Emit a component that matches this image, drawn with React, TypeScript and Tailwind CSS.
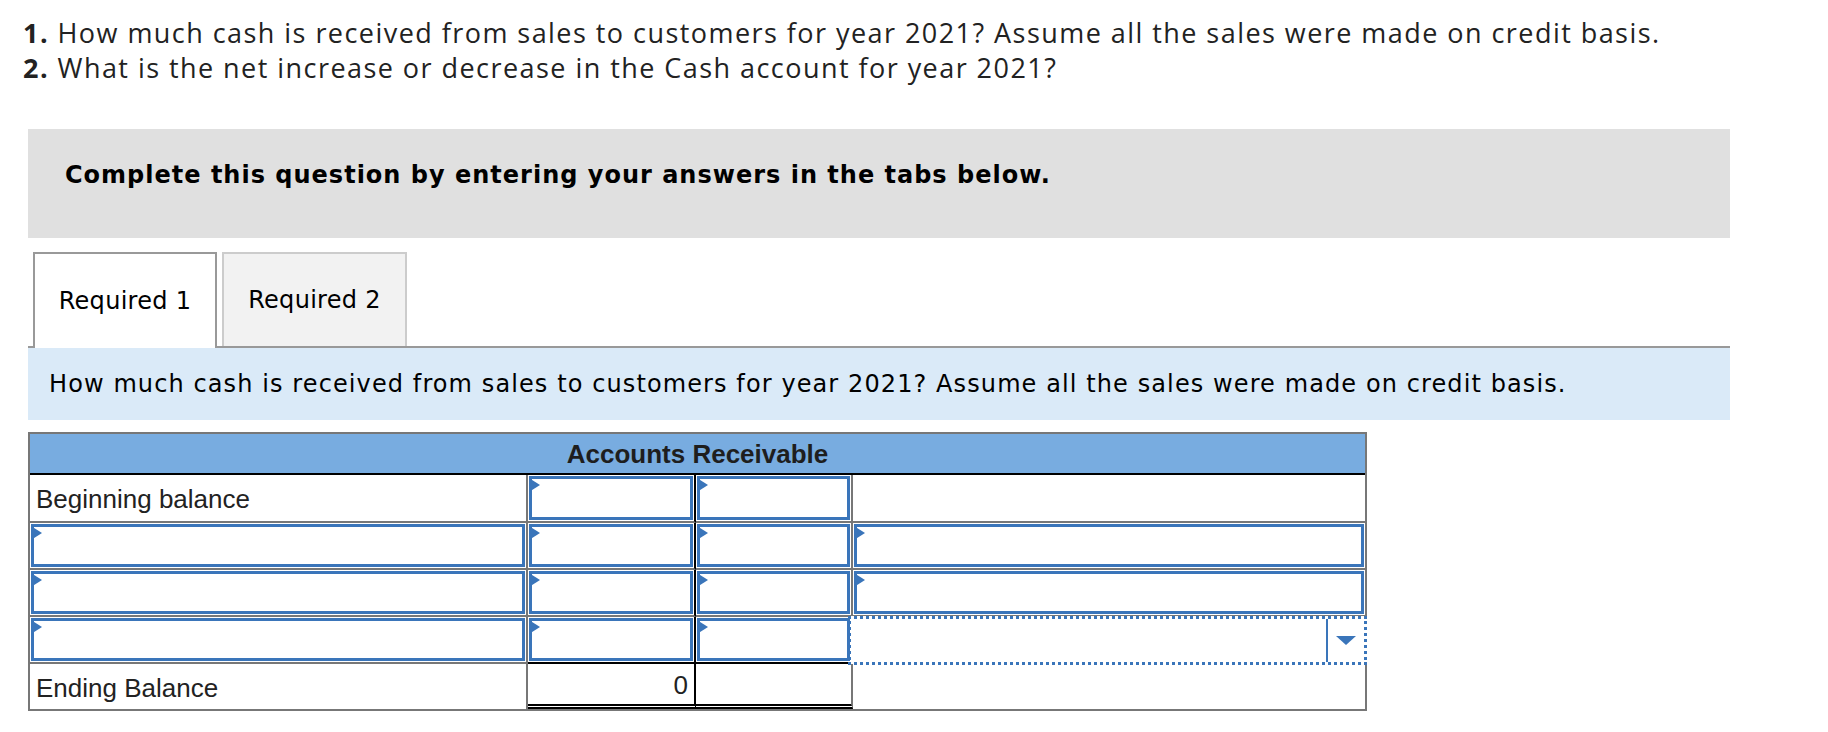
import React from 'react';

type Border = 'gray' | 'black' | 'none';

function Flag() {
  return (
    <svg className="absolute left-[-3px] top-[-1px]" width="11" height="14" viewBox="0 0 11 14">
      <path d="M0 0 L11 7 L0 14 Z" fill="#3a75ba" />
    </svg>
  );
}

function InputBox() {
  return (
    <div className="relative h-full w-full border-[3px] border-[#3a75ba] bg-white">
      <Flag />
    </div>
  );
}

function Cell({
  children,
  h,
  right = 'gray',
  bottom = 'gray',
  className = '',
}: {
  children?: React.ReactNode;
  h: string;
  right?: Border;
  bottom?: Border;
  className?: string;
}) {
  const r = right === 'gray' ? 'border-r-2 border-r-[#777]' : right === 'black' ? 'border-r-2 border-r-black' : '';
  const b = bottom === 'gray' ? 'border-b-2 border-b-[#777]' : bottom === 'black' ? 'border-b-2 border-b-black' : '';
  return <div className={`${h} ${r} ${b} ${className}`}>{children}</div>;
}

function Dropdown() {
  return (
    <div className="-ml-[5px] -mr-[2px] -mt-[1px] flex h-[49px] border-[3px] border-dotted border-[#3a75ba] bg-white">
      <div className="flex-1 border-r-2 border-[#3a75ba]" />
      <div className="flex w-[36px] items-center justify-center">
        <svg width="20" height="9" viewBox="0 0 20 9">
          <path d="M0 0 L20 0 L10 9 Z" fill="#3a75ba" />
        </svg>
      </div>
    </div>
  );
}

export default function App() {
  const r1 = 'h-[48px]';
  const r2 = 'h-[47px]';
  const r5 = 'h-[45px]';

  return (
    <div className="h-[732px] w-[1828px] overflow-hidden bg-white">
      <div className="pl-[23px] pt-[15px] font-['Open_Sans',sans-serif] text-[27px] leading-[35px] tracking-[1.45px] text-[#222]">
        <p>
          <b>1.</b> How much cash is received from sales to customers for year 2021? Assume all the sales were made on credit basis.
        </p>
        <p>
          <b>2.</b> What is the net increase or decrease in the Cash account for year 2021?
        </p>
      </div>

      <div className="ml-[28px] w-[1702px]">
        <div className="mt-[44px] h-[109px] bg-[#e0e0e0] pl-[37px] pt-[31px] font-['DejaVu_Sans',Verdana,sans-serif] text-[24px] font-bold leading-[30px] tracking-[1px] text-black">
          Complete this question by entering your answers in the tabs below.
        </div>

        <div className="mt-[14px] flex items-start border-b-2 border-[#999] font-['DejaVu_Sans',Verdana,sans-serif] text-[24px] tracking-[0.3px] text-black">
          <div className="-mb-[2px] ml-[5px] flex h-[96px] w-[184px] items-center justify-center border-2 border-b-0 border-[#999] bg-white">
            Required 1
          </div>
          <div className="ml-[5px] flex h-[94px] w-[185px] items-center justify-center border-2 border-b-0 border-[#ccc] bg-[#f2f2f2]">
            Required 2
          </div>
        </div>

        <div className="flex h-[72px] items-center bg-[#daeaf8] pl-[21px] font-['DejaVu_Sans',Verdana,sans-serif] text-[24px] tracking-[1.1px] text-black">
          How much cash is received from sales to customers for year 2021? Assume all the sales were made on credit basis.
        </div>

        <div className="mt-[12px] w-[1339px] border-2 border-[#777] font-['Liberation_Sans',Arial,sans-serif] text-[26px] text-[#222]">
          <div className="flex h-[41px] items-center justify-center border-b-2 border-black bg-[#78ace0] pt-[2px] text-[26px] font-bold text-[#1e1e1e]">
            Accounts Receivable
          </div>
          <div className="grid grid-cols-[498px_168px_157px_1fr]">
            {/* row 1 */}
            <Cell h={r1} className="flex items-center pl-[6px] pt-[2px]">Beginning balance</Cell>
            <Cell h={r1} right="black" className="p-[1px]"><InputBox /></Cell>
            <Cell h={r1} className="p-[1px]"><InputBox /></Cell>
            <Cell h={r1} right="none" />

            {/* row 2 */}
            <Cell h={r2} className="p-[1px]"><InputBox /></Cell>
            <Cell h={r2} right="black" className="p-[1px]"><InputBox /></Cell>
            <Cell h={r2} className="p-[1px]"><InputBox /></Cell>
            <Cell h={r2} right="none" className="p-[1px]"><InputBox /></Cell>

            {/* row 3 */}
            <Cell h={r2} className="p-[1px]"><InputBox /></Cell>
            <Cell h={r2} right="black" className="p-[1px]"><InputBox /></Cell>
            <Cell h={r2} className="p-[1px]"><InputBox /></Cell>
            <Cell h={r2} right="none" className="p-[1px]"><InputBox /></Cell>

            {/* row 4 */}
            <Cell h={r2} className="p-[1px]"><InputBox /></Cell>
            <Cell h={r2} right="black" bottom="black" className="p-[1px]"><InputBox /></Cell>
            <Cell h={r2} bottom="black" className="p-[1px]"><InputBox /></Cell>
            <Cell h={r2} right="none"><Dropdown /></Cell>

            {/* row 5 */}
            <Cell h={r5} bottom="none" className="flex items-center pl-[6px] pt-[4px]">Ending Balance</Cell>
            <Cell h={r5} right="black" bottom="none" className="flex items-center justify-end border-b-[5px] border-double border-b-black pr-[6px] pt-[2px]">
              0
            </Cell>
            <Cell h={r5} bottom="none" className="border-b-[5px] border-double border-b-black" />
            <Cell h={r5} right="none" bottom="none" />
          </div>
        </div>
      </div>
    </div>
  );
}
